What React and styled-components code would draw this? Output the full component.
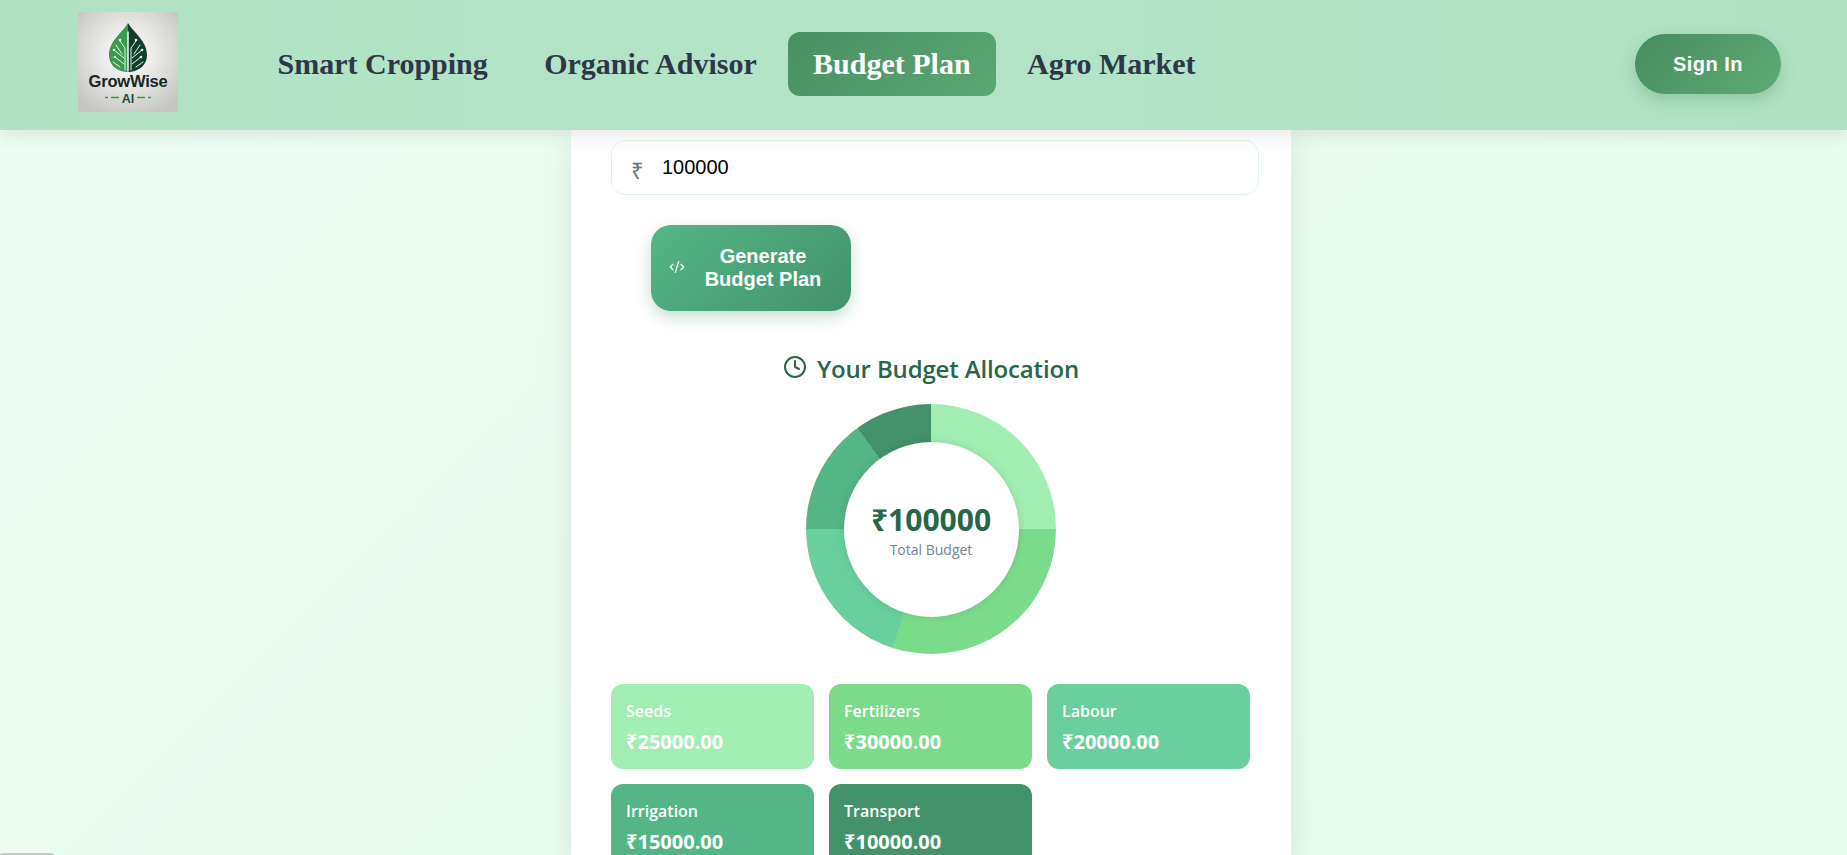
import React from 'react'
import styled, { createGlobalStyle } from 'styled-components'
import { Clock, CodeXml } from 'lucide-react'

const BUDGET = [
  { name: 'Seeds', amount: 25000, color: '#a2eeb2' },
  { name: 'Fertilizers', amount: 30000, color: '#7adc8a' },
  { name: 'Labour', amount: 20000, color: '#6acf9f' },
  { name: 'Irrigation', amount: 15000, color: '#54b687' },
  { name: 'Transport', amount: 10000, color: '#43926c' },
]

const NAV_LINKS = ['Smart Cropping', 'Organic Advisor', 'Budget Plan', 'Agro Market']

const donutStops = () => {
  const total = BUDGET.reduce((sum, item) => sum + item.amount, 0)
  let from = 0
  const stops = BUDGET.map((item) => {
    const to = from + (item.amount / total) * 100
    const stop = `${item.color} ${from}% ${to}%`
    from = to
    return stop
  })
  return `conic-gradient(${stops.join(', ')})`
}

const Logo = () => (
  <LogoBox viewBox="0 0 100 100" role="img" aria-label="GrowWise AI">
    <defs>
      <radialGradient id="logoBg" cx="50%" cy="42%" r="65%">
        <stop offset="0%" stopColor="#ffffff" />
        <stop offset="45%" stopColor="#e8e8e6" />
        <stop offset="100%" stopColor="#c6c6c2" />
      </radialGradient>
    </defs>
    <rect width="100" height="100" fill="url(#logoBg)" />
    <path d="M50 11 C44 21 31 29 31 43 C31 55 42 60 50 60 Z" fill="#3b9a4c" />
    <path d="M50 11 C56 21 69 29 69 43 C69 55 58 60 50 60 Z" fill="#123f2b" />
    <g fill="none" stroke="#e9f5ea" strokeWidth="1" strokeLinecap="round">
      <path d="M50 20 V59" strokeWidth="1.6" />
      <path d="M47 58 V36 L42 29" />
      <path d="M53 58 V36 L58 29" />
      <path d="M46 52 L37 45 M46 46 L36 38 M44 42 L38 33" />
      <path d="M54 52 L63 45 M54 46 L64 38 M56 42 L62 33" />
      <path d="M42 55 L35 50 M58 55 L65 50" />
    </g>
    <g fill="#e9f5ea">
      <circle cx="42" cy="28" r="1.3" />
      <circle cx="58" cy="28" r="1.3" />
      <circle cx="36" cy="38" r="1.3" />
      <circle cx="64" cy="38" r="1.3" />
      <circle cx="37" cy="45" r="1.3" />
      <circle cx="63" cy="45" r="1.3" />
    </g>
    <LogoName x="50" y="75" textAnchor="middle">GrowWise</LogoName>
    <LogoAi x="50" y="90.5" textAnchor="middle">AI</LogoAi>
    <path d="M27 85.5 H30 M33 85.5 H41 M59 85.5 H67 M70 85.5 H73" stroke="#3b9a4c" strokeWidth="1.4" />
  </LogoBox>
)

const App = () => {
  return (
    <Page>
      <GlobalStyle />
      <Navbar>
        <Logo />
        <NavLinks>
          {NAV_LINKS.map((link) => (
            <NavLink key={link} $active={link === 'Budget Plan'}>{link}</NavLink>
          ))}
        </NavLinks>
        <SignIn>Sign In</SignIn>
      </Navbar>
      <Main>
        <Card>
          <InputWrap>
            <Rupee>₹</Rupee>
            <AmountInput type="text" defaultValue="100000" />
          </InputWrap>
          <GenerateButton>
            <CodeXml size={16} strokeWidth={2} />
            <span>Generate Budget Plan</span>
          </GenerateButton>
          <ResultTitle>
            <Clock size={24} strokeWidth={2} />
            Your Budget Allocation
          </ResultTitle>
          <Donut style={{ background: donutStops() }}>
            <DonutCenter>
              <DonutTotal>₹100000</DonutTotal>
              <DonutLabel>Total Budget</DonutLabel>
            </DonutCenter>
          </Donut>
          <StatGrid>
            {BUDGET.map((item) => (
              <Stat key={item.name} $color={item.color}>
                <StatName>{item.name}</StatName>
                <StatValue>₹{item.amount}.00</StatValue>
              </Stat>
            ))}
          </StatGrid>
        </Card>
      </Main>
      <CornerTab />
    </Page>
  )
}

export default App

const GlobalStyle = createGlobalStyle`
  html, body {
    margin: 0;
    padding: 0;
    height: 100%;
    overflow: hidden;
  }
  * {
    box-sizing: border-box;
  }
`

const Page = styled.div`
  position: relative;
  height: 100vh;
  display: flex;
  flex-direction: column;
  overflow: hidden;
  background: linear-gradient(135deg, #eefdf3 0%, #e5fbed 100%);
  font-family: 'Open Sans', 'Noto Sans', sans-serif;
`

const Navbar = styled.header`
  position: relative;
  z-index: 2;
  flex: none;
  height: 129.5px;
  display: flex;
  align-items: center;
  padding: 0 66px 0 78px;
  background: linear-gradient(90deg, #afe2c3 0%, #b4e4c8 40%, #afe2c3 100%);
  box-shadow: 0 4px 20px rgba(0, 0, 0, 0.1);
`

const LogoBox = styled.svg`
  width: 100px;
  height: 100px;
  margin-bottom: 5px;
  flex: none;
`

const LogoName = styled.text`
  font-family: 'Liberation Sans', sans-serif;
  font-size: 16.5px;
  font-weight: 700;
  fill: #16271f;
  letter-spacing: -0.2px;
`

const LogoAi = styled.text`
  font-family: 'Liberation Sans', sans-serif;
  font-size: 12.5px;
  font-weight: 700;
  fill: #1d4a32;
`

const NavLinks = styled.nav`
  display: flex;
  align-items: center;
  gap: 6.4px;
  margin-left: 74.5px;
  flex: 1;
`

const NavLink = styled.a`
  padding: 14px 25px;
  margin-bottom: 1px;
  border-radius: 12px;
  font-family: 'Liberation Serif', serif;
  font-size: 30px;
  font-weight: 700;
  line-height: 36px;
  color: ${(p) => (p.$active ? '#ffffff' : '#2d3748')};
  background: ${(p) => (p.$active ? 'linear-gradient(135deg, #4a8f62, #5aa872)' : 'transparent')};
`

const SignIn = styled.button`
  width: 146px;
  height: 60px;
  margin-bottom: 1px;
  border: 0;
  border-radius: 30px;
  font-family: 'Liberation Sans', sans-serif;
  font-size: 20px;
  font-weight: 700;
  letter-spacing: 0.5px;
  color: #ffffff;
  background: linear-gradient(135deg, #488c60, #5fab74);
  box-shadow: 0 6px 15px rgba(72, 140, 96, 0.3);
`

const Main = styled.main`
  flex: 1;
  min-height: 0;
  display: flex;
  justify-content: center;
  padding-left: 15px;
`

const Card = styled.section`
  width: 720px;
  flex: none;
  padding: 10.5px 40px 0;
  background: #ffffff;
  box-shadow: 0 10px 30px rgba(0, 0, 0, 0.1);
`

const InputWrap = styled.div`
  display: flex;
  align-items: center;
  width: calc(100% + 8px);
  height: 55px;
  padding: 0 20px;
  border: 1.5px solid #dcf6e6;
  border-radius: 14px;
  background: #ffffff;
`

const Rupee = styled.span`
  width: 30px;
  flex: none;
  padding-top: 4px;
  margin-left: -1px;
  font-family: 'Noto Sans', sans-serif;
  font-size: 22px;
  line-height: 28px;
  color: #6b7280;
`

const AmountInput = styled.input`
  flex: 1;
  border: 0;
  outline: 0;
  padding: 0 0 0 1px;
  margin-top: -1px;
  font-family: 'Liberation Sans', sans-serif;
  font-size: 20px;
  color: #000000;
  background: transparent;
`

const GenerateButton = styled.button`
  display: flex;
  align-items: center;
  gap: 8px;
  width: 200px;
  margin: 30px 0 0 40px;
  padding: 20px 18px;
  border: 0;
  border-radius: 20px;
  font-family: 'Liberation Sans', sans-serif;
  font-size: 20px;
  font-weight: 700;
  color: #ffffff;
  background: linear-gradient(135deg, #54b687, #43926c);
  box-shadow: 0 6px 15px rgba(67, 146, 108, 0.3);
  svg {
    flex: none;
    margin-top: -2px;
  }
  span {
    flex: 1;
    text-align: center;
  }
`

const ResultTitle = styled.h2`
  display: flex;
  align-items: center;
  justify-content: center;
  gap: 10px;
  margin: 39px 0 17px;
  font-size: 24px;
  font-weight: 600;
  line-height: 37px;
  letter-spacing: -0.15px;
  color: #276749;
  svg {
    margin-top: -3px;
  }
`

const Donut = styled.div`
  position: relative;
  display: flex;
  align-items: center;
  justify-content: center;
  width: 250px;
  height: 250px;
  margin: 0 auto;
  border-radius: 50%;
`

const DonutCenter = styled.div`
  width: 175px;
  height: 175px;
  display: flex;
  flex-direction: column;
  align-items: center;
  justify-content: center;
  padding-top: 3px;
  border-radius: 50%;
  background: #ffffff;
  box-shadow: 0 0 8px rgba(0, 0, 0, 0.12);
`

const DonutTotal = styled.div`
  font-size: 30px;
  font-weight: 700;
  line-height: 38px;
  color: #276749;
`

const DonutLabel = styled.div`
  margin-top: 1px;
  font-size: 14px;
  line-height: 20px;
  color: #718096;
`

const StatGrid = styled.div`
  display: grid;
  grid-template-columns: repeat(3, 203px);
  gap: 15px;
  margin-top: 30px;
`

const Stat = styled.div`
  height: 85px;
  padding: 16px 15px 0;
  border-radius: 12px;
  color: #ffffff;
  background: ${(p) => p.$color};
`

const StatName = styled.div`
  font-size: 16px;
  font-weight: 600;
  line-height: 22px;
`

const StatValue = styled.div`
  margin-top: 7px;
  font-size: 20px;
  font-weight: 700;
  line-height: 26px;
`

const CornerTab = styled.div`
  position: absolute;
  left: 0;
  bottom: 0;
  width: 54px;
  height: 2px;
  border-radius: 4px 4px 0 0;
  background: #c8ccc8;
`
